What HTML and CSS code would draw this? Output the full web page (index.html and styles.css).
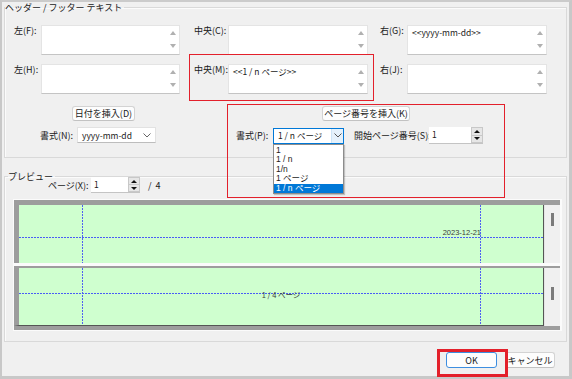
FILE: index.html
```html
<!DOCTYPE html>
<html lang="ja">
<head>
    <meta charset="UTF-8">
    <title>ヘッダー / フッター</title>
    <link rel="stylesheet" href="styles.css">
</head>
<body>
    <div class="window">
        <fieldset class="group group-text">
            <legend>ヘッダー / フッター テキスト</legend>
            <div class="fields">
                <span class="lbl">左(F):</span>
                <div class="memo"><div class="memo-text"></div><div class="arrows"><i class="up"></i><i class="down"></i></div></div>
                <span class="lbl lbl-mid">中央(C):</span>
                <div class="memo"><div class="memo-text"></div><div class="arrows"><i class="up"></i><i class="down"></i></div></div>
                <span class="lbl lbl-right">右(G):</span>
                <div class="memo"><div class="memo-text">&lt;&lt;yyyy-mm-dd&gt;&gt;</div><div class="arrows"><i class="up"></i><i class="down"></i></div></div>

                <span class="lbl">左(H):</span>
                <div class="memo"><div class="memo-text"></div><div class="arrows"><i class="up"></i><i class="down"></i></div></div>
                <span class="lbl lbl-mid">中央(M):</span>
                <div class="memo"><div class="memo-text">&lt;&lt;1 / n ページ&gt;&gt;</div><div class="arrows"><i class="up"></i><i class="down"></i></div></div>
                <span class="lbl lbl-right">右(J):</span>
                <div class="memo"><div class="memo-text"></div><div class="arrows"><i class="up"></i><i class="down"></i></div></div>
            </div>

            <div class="tools">
                <div class="tool-left">
                    <button class="btn btn-date">日付を挿入(D)</button>
                    <div class="format-row">
                        <span class="lbl-fmt">書式(N):</span>
                        <div class="select sel-date">
                            <span class="sel-val">yyyy-mm-dd</span>
                            <span class="drop"><svg width="8" height="5" viewBox="0 0 8 5"><polyline points="0.5,0.5 4,4 7.5,0.5" fill="none" stroke="#666" stroke-width="1"/></svg></span>
                        </div>
                    </div>
                </div>
                <div class="tool-right">
                    <button class="btn btn-page">ページ番号を挿入(K)</button>
                    <div class="format-row">
                        <span class="lbl-fmt">書式(P):</span>
                        <div class="select sel-page">
                            <span class="sel-val">1 / n ページ</span>
                            <span class="drop"><svg width="8" height="5" viewBox="0 0 8 5"><polyline points="0.5,0.5 4,4 7.5,0.5" fill="none" stroke="#555" stroke-width="1"/></svg></span>
                            <ul class="droplist">
                                <li>1</li>
                                <li>1 / n</li>
                                <li>1/n</li>
                                <li>1 ページ</li>
                                <li class="selected">1 / n ページ</li>
                            </ul>
                        </div>
                        <span class="lbl-start">開始ページ番号(S):</span>
                        <div class="spin spin-start">
                            <span class="spin-val">1</span>
                            <div class="spin-btns"><i class="s-up"></i><i class="s-down"></i></div>
                        </div>
                    </div>
                </div>
            </div>
        </fieldset>

        <fieldset class="group group-preview">
            <legend>プレビュー</legend>
            <div class="page-row">
                <span class="lbl-page">ページ(X):</span>
                <div class="spin spin-page">
                    <span class="spin-val">1</span>
                    <div class="spin-btns"><i class="s-up"></i><i class="s-down"></i></div>
                </div>
                <span class="page-total">/&nbsp;&nbsp;4</span>
            </div>

            <div class="preview">
                <div class="strip strip-top">
                    <div class="sheet">
                        <div class="guide-v guide-left"></div>
                        <div class="guide-v guide-right"></div>
                        <div class="guide-h guide-head"></div>
                        <span class="head-date">2023-12-21</span>
                    </div>
                    <div class="side"><span class="thumb thumb-top"></span></div>
                </div>
                <div class="strip strip-bottom">
                    <div class="sheet">
                        <div class="guide-v guide-left"></div>
                        <div class="guide-v guide-right"></div>
                        <div class="guide-h guide-foot"></div>
                        <span class="foot-page">1 / 4 ページ</span>
                    </div>
                    <div class="side"><span class="thumb thumb-bottom"></span></div>
                </div>
            </div>
        </fieldset>

        <div class="footer">
            <button class="btn btn-ok">OK</button>
            <button class="btn btn-cancel">キャンセル</button>
        </div>

        <!-- highlight frames drawn over the dialog -->
        <div class="mark mark-center"></div>
        <div class="mark mark-page"></div>
        <div class="mark mark-ok"></div>
    </div>
</body>
</html>
```

FILE: styles.css
```css
* {
    margin: 0;
    padding: 0;
    box-sizing: border-box;
}

body {
    font-family: "Noto Sans CJK JP", "Noto Sans", sans-serif;
    font-size: 9px;
    line-height: 11px;
    color: #1a1a1a;
    background: #f0f0f0;
}

.window {
    position: relative;
    width: 572px;
    height: 379px;
    background: #f0f0f0;
    border-left: 2px solid #c8c8c8;
    border-top: 2px solid #cbcbcb;
    border-right: 3px solid #c8c8c8;
    border-bottom: 3px solid #c8c8c8;
    display: flex;
    flex-direction: column;
}

/* Group boxes */
.group {
    margin: 0 2px;
    border: 1px solid #d9d9d9;
    box-shadow: inset 1px 1px 0 #fbfbfb;
    min-width: 0;
}

.group legend {
    padding: 0 2px 0 0;
    line-height: 11px;
    color: #222;
}

.group-preview {
    margin-top: 13px;
    padding-bottom: 10px;
}

.group-preview legend {
    margin-left: 3px;
}

.group-text {
    padding-bottom: 13px;
}

/* Text fields */
.fields {
    display: grid;
    grid-template-columns: 27px 139px 48px 140px 39px 140px;
    grid-auto-rows: 30px;
    row-gap: 9px;
    margin-top: 12px;
    padding-left: 9px;
}

.lbl {
    line-height: 10px;
    margin-top: 1px;
    white-space: nowrap;
}

.lbl-mid {
    padding-left: 14px;
}

.lbl-right {
    padding-left: 12px;
}

.memo {
    display: flex;
    background: #fff;
    border: 1px solid #e4e4e4;
    border-bottom-color: #c4c4c4;
}

.memo-text {
    flex: 1;
    padding: 1px 0 0 4px;
    font-size: 8.5px;
    line-height: 10px;
    color: #222;
}

.arrows {
    width: 13px;
    display: flex;
    flex-direction: column;
    justify-content: space-between;
    align-items: center;
    padding: 5px 0 6px;
}

.arrows i {
    width: 0;
    height: 0;
    border-left: 3px solid transparent;
    border-right: 3px solid transparent;
}

.arrows .up {
    border-bottom: 4px solid #b0b0b0;
}

.arrows .down {
    border-top: 4px solid #b0b0b0;
}

/* Insert tools */
.tools {
    display: flex;
    margin-top: 12px;
}

.tool-left {
    margin-left: 35px;
    width: 116px;
}

.tool-right {
    margin-left: 80px;
}

.btn {
    display: block;
    height: 15px;
    font-family: inherit;
    font-size: 9px;
    line-height: 13px;
    color: #1a1a1a;
    background: #fdfdfd;
    border: 1px solid #d3d3d3;
    border-bottom-color: #c2c2c2;
    border-radius: 3px;
}

.btn-date {
    width: 63px;
    margin-left: 32px;
}

.btn-page {
    width: 88px;
    margin-left: 86px;
}

.format-row {
    display: flex;
    align-items: center;
    margin-top: 6px;
}

.lbl-fmt {
    width: 37px;
    white-space: nowrap;
}

.select {
    position: relative;
    display: flex;
    align-items: center;
    height: 16px;
    background: #fff;
    border: 1px solid #e2e2e2;
    border-bottom-color: #bdbdbd;
}

.sel-val {
    flex: 1;
    padding-left: 4px;
    font-size: 8.5px;
    white-space: nowrap;
}

.drop {
    width: 12px;
    height: 100%;
    display: flex;
    align-items: center;
    justify-content: center;
}

.sel-date {
    width: 79px;
}

.sel-date .drop {
    margin-right: 2px;
}

.sel-page {
    width: 71px;
    border-color: #0078d7;
}

.sel-page .drop {
    background: #e5f1fb;
    border-left: 1px solid #cce4f7;
}

.droplist {
    position: absolute;
    top: 15px;
    left: -1px;
    width: 71px;
    list-style: none;
    background: #fff;
    border: 1px solid #8c8c8c;
    box-shadow: 1px 1px 1px rgba(0, 0, 0, 0.2);
    padding-top: 1px;
}

.droplist li {
    height: 9.6px;
    line-height: 9.6px;
    padding-left: 2px;
    font-family: "Liberation Sans", "Noto Sans CJK JP", sans-serif;
    font-size: 8.5px;
    white-space: nowrap;
    overflow: hidden;
}

.droplist .selected {
    background: #0078d7;
    color: #fff;
}

.lbl-start {
    width: 75px;
    margin-left: 10px;
    white-space: nowrap;
}

/* Spin boxes */
.spin {
    display: flex;
    height: 17px;
    background: #fff;
    border-bottom: 1px solid #c4c4c4;
}

.spin-val {
    flex: 1;
    padding: 2px 0 0 3px;
    font-size: 8.5px;
}

.spin-btns {
    width: 12px;
    display: flex;
    flex-direction: column;
    border: 1px solid #c8c8c8;
    background: #e6e6e6;
}

.spin-btns i {
    flex: 1;
    display: flex;
    align-items: center;
    justify-content: center;
}

.spin-btns i + i {
    border-top: 1px solid #c8c8c8;
}

.spin-btns i::after {
    content: "";
    border-left: 3px solid transparent;
    border-right: 3px solid transparent;
}

.spin-btns .s-up::after {
    border-bottom: 3px solid #111;
}

.spin-btns .s-down::after {
    border-top: 3px solid #111;
}

.spin-start {
    width: 54px;
}

.spin-page {
    width: 49px;
    height: 16px;
}

/* Preview */
.page-row {
    display: flex;
    align-items: center;
    margin: -5px 0 0 43px;
}

.lbl-page {
    width: 43px;
    white-space: nowrap;
}

.page-total {
    margin-left: 8px;
}

.preview {
    width: 549px;
    margin: 6px 0 0 8px;
    background: #fbfbfb;
    border: 1px solid #fbfbfb;
    border-right-width: 2px;
}

.strip {
    display: flex;
    background: #9d9d9d;
}

.strip-top {
    height: 63px;
    padding-top: 5px;
}

.strip-bottom {
    height: 64px;
    margin-top: 3px;
    padding: 2px 0 4px;
}

.sheet {
    position: relative;
    flex: 1;
    background: #cfffcf;
    border-left: 5px solid #9d9d9d;
    border-right: 1px solid #555;
}

.strip-bottom .sheet {
    border-bottom: 1px solid #555;
}

.side {
    width: 16px;
    background: #f0f0f0;
    border-left: 1px solid #e4e4e4;
    display: flex;
    justify-content: center;
}

.thumb {
    width: 3px;
    height: 13px;
    background: #7b7b7b;
}

.thumb-top {
    margin-top: 8px;
}

.thumb-bottom {
    margin-top: 19px;
}

/* margin guides on the page canvas */
.guide-v {
    position: absolute;
    top: 0;
    bottom: 0;
    width: 1px;
    background: repeating-linear-gradient(180deg, #4f5ff2 0 2px, transparent 2px 3px);
}

.guide-left {
    left: 63px;
}

.guide-right {
    left: 461px;
}

.guide-h {
    position: absolute;
    left: 0;
    right: 0;
    height: 1px;
    background: repeating-linear-gradient(90deg, #4a5cf5 0 2px, transparent 2px 3px);
}

.guide-head {
    top: 32px;
}

.guide-foot {
    top: 25px;
}

.head-date,
.foot-page {
    position: absolute;
    font-family: "Liberation Sans", "Noto Sans CJK JP", sans-serif;
    font-size: 7.5px;
    line-height: 9px;
    color: #3a3a3a;
}

.head-date {
    right: 62px;
    top: 23px;
}

.foot-page {
    left: 0;
    right: 0;
    top: 22px;
    text-align: center;
    font-family: "Noto Sans CJK JP", sans-serif;
}

/* Dialog buttons */
.footer {
    display: flex;
    justify-content: flex-end;
    gap: 8px;
    margin-top: 10px;
    padding-right: 14px;
}

.btn-ok {
    width: 51px;
    height: 16px;
    border-color: #3d8ee0;
}

.btn-cancel {
    width: 50px;
    height: 16px;
}

/* red highlight frames */
.mark {
    position: absolute;
    border: 1px solid #e3202b;
}

.mark-center {
    left: 187px;
    top: 52px;
    width: 185px;
    height: 47px;
}

.mark-page {
    left: 225px;
    top: 102px;
    width: 278px;
    height: 94px;
}

.mark-ok {
    left: 435px;
    top: 347px;
    width: 71px;
    height: 28px;
    border-width: 3px;
}
```
